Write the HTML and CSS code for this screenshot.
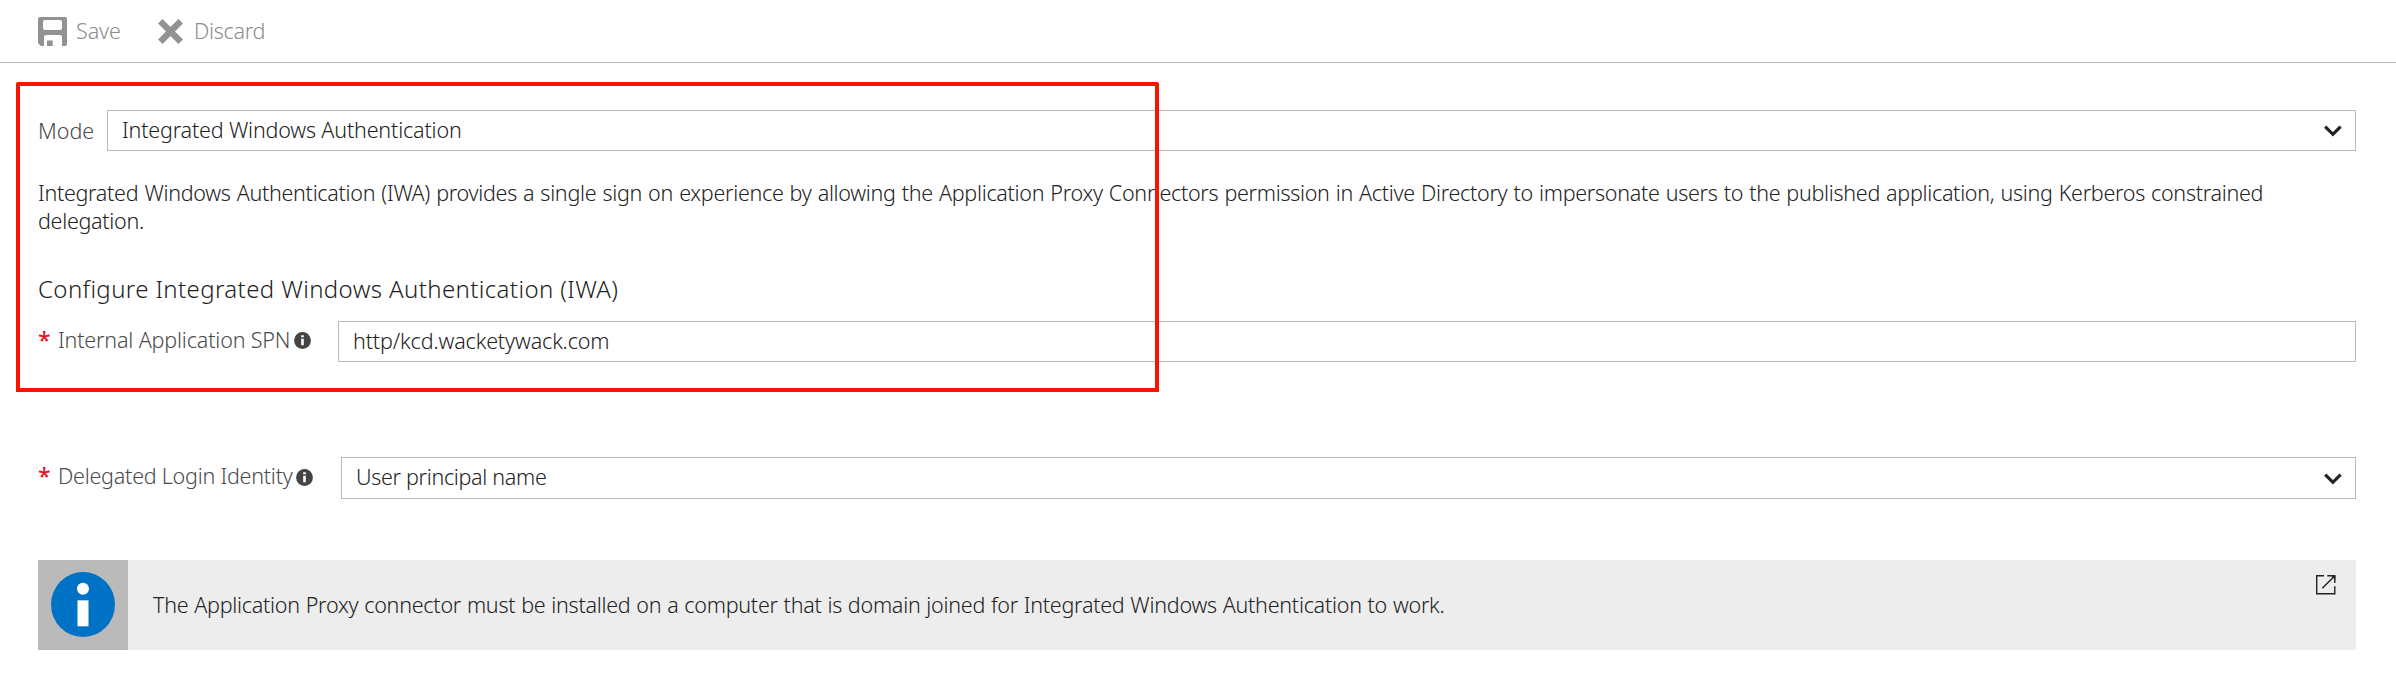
FILE: index.html
```
<!DOCTYPE html>
<html lang="en">
<head>
<meta charset="utf-8">
<title>Single sign-on</title>
<link rel="stylesheet" href="styles.css">
</head>
<body>
<header class="toolbar">
  <button class="command save">
    <svg width="29" height="29" viewBox="0 0 29 29"><path fill="#929292" fill-rule="evenodd" d="M2 0H27Q29 0 29 2V27Q29 29 27 29H24V20Q24 18 22 18H8Q6 18 6 20V29H3L0 26V2Q0 0 2 0ZM7 3Q5 3 5 5V11Q5 13 7 13H22Q24 13 24 11V5Q24 3 22 3ZM9 23.5H14.7V29H9Z"/></svg>
    <span>Save</span>
  </button>
  <button class="command discard">
    <svg width="25" height="25" viewBox="0 0 25 25"><path stroke="#929292" stroke-width="6.4" d="M2.3 2.3L22.7 22.7M22.7 2.3L2.3 22.7"/></svg>
    <span>Discard</span>
  </button>
</header>
<main class="content">
  <div class="field mode">
    <label class="label">Mode</label>
    <div class="box"><span class="value-mode">Integrated Windows Authentication</span>
      <svg class="chevron" width="18" height="12" viewBox="0 0 18 12"><path fill="none" stroke="#222" stroke-width="3.2" d="M1.2 1.6L8.9 9.3L16.6 1.6"/></svg>
    </div>
  </div>
  <p class="description">Integrated Windows Authentication (IWA) provides a single sign on experience by allowing the Application Proxy Connectors permission in Active Directory to impersonate users to the published application, using Kerberos constrained delegation.</p>
  <h2 class="heading">Configure Integrated Windows Authentication (IWA)</h2>
  <div class="field spn">
    <label class="label"><span class="required">*</span><span class="name">Internal Application SPN</span>
      <svg class="hint" width="17" height="17" viewBox="0 0 17 17"><circle cx="8.5" cy="8.5" r="8.4" fill="#444"/><path fill="#fff" d="M7.2 3.3h2.6v2H7.2zM7.2 6.8h2.6v6.4H7.2z"/></svg>
    </label>
    <div class="box"><span class="value-spn">http/kcd.wacketywack.com</span></div>
  </div>
  <div class="field identity">
    <label class="label"><span class="required">*</span><span class="name">Delegated Login Identity</span>
      <svg class="hint" width="17" height="17" viewBox="0 0 17 17"><circle cx="8.5" cy="8.5" r="8.4" fill="#444"/><path fill="#fff" d="M7.2 3.3h2.6v2H7.2zM7.2 6.8h2.6v6.4H7.2z"/></svg>
    </label>
    <div class="box"><span class="value-identity">User principal name</span>
      <svg class="chevron" width="18" height="12" viewBox="0 0 18 12"><path fill="none" stroke="#222" stroke-width="3.2" d="M1.2 1.6L8.9 9.3L16.6 1.6"/></svg>
    </div>
  </div>
  <div class="notice">
    <div class="notice-icon">
      <svg width="64" height="65" viewBox="0 0 64 65"><ellipse cx="32" cy="32.5" rx="32" ry="32.5" fill="#0072c6"/><circle cx="32" cy="16.8" r="6" fill="#fff"/><path fill="#fff" d="M26.5 28.3h11v26h-11z"/></svg>
    </div>
    <span class="notice-text">The Application Proxy connector must be installed on a computer that is domain joined for Integrated Windows Authentication to work.</span>
    <svg class="external" width="20" height="20" viewBox="0 0 20 20"><path fill="none" stroke="#222" stroke-width="1.4" d="M8 .7H.7V18.8H18.8V11.3M11.3 .7H18.8V8M18.8 .7L6.3 13.2"/><path fill="#222" d="M14.8 .5h4.5V5z"/></svg>
  </div>
</main>
<div class="highlight"></div>
</body>
</html>
```
FILE: styles.css
```
* { box-sizing: border-box; }
body {
  position: relative;
  margin: 0;
  background: #fff;
  color: #222;
  font: 300 21.5px/28px "Noto Sans", "Open Sans", sans-serif;
}
svg { display: block; flex: none; }
.toolbar {
  display: flex;
  align-items: center;
  height: 63px;
  padding: 0 38px;
  border-bottom: 1px solid #b9b9b9;
}
.command {
  display: flex;
  align-items: center;
  padding: 0;
  border: 0;
  background: none;
  color: #8c8c8c;
  font: inherit;
}
.save { width: 120px; gap: 9px; letter-spacing: -.1px; }
.discard { gap: 11px; letter-spacing: -.3px; }
.content { padding: 47px 40px 0 38px; }
.field { display: flex; height: 41px; }
.label {
  display: flex;
  flex: none;
  align-items: center;
  color: #4a4a4a;
}
.box {
  display: flex;
  flex: 1;
  align-items: center;
  justify-content: space-between;
  padding: 0 13px 2px 14px;
  border: 1px solid #b9b9b9;
  white-space: nowrap;
}
.mode .label { width: 69px; }
.value-mode { letter-spacing: -.17px; }
.chevron { margin-top: 3px; }
.description {
  margin: 28px 0 0;
  padding-right: 60px;
  letter-spacing: -.29px;
  word-spacing: .8px;
}
.heading {
  margin: 38px 0 16px;
  font-size: 24px;
  font-weight: 300;
  line-height: 32px;
  letter-spacing: .39px;
}
.spn .label { width: 300px; padding-bottom: 4px; }
.required {
  width: 20px;
  color: #e81123;
  font-size: 23px;
  font-weight: 500;
}
.name { letter-spacing: -.16px; white-space: nowrap; }
.hint { margin: 2px 0 0 4px; }
.value-spn { letter-spacing: -.14px; }
.identity { height: 42px; margin-top: 95px; }
.identity .label { width: 303px; padding-bottom: 4px; }
.identity .name { letter-spacing: -.23px; }
.identity .hint { margin-left: 3px; }
.value-identity { letter-spacing: -.31px; }
.notice {
  display: flex;
  align-items: center;
  height: 90px;
  margin-top: 61px;
  background: #ededed;
}
.notice-icon {
  display: flex;
  align-items: center;
  justify-content: center;
  width: 90px;
  height: 90px;
  padding-bottom: 1px;
  background: #bababa;
}
.notice-text {
  margin-left: 25px;
  letter-spacing: -.25px;
  word-spacing: .5px;
  white-space: nowrap;
}
.external { align-self: flex-start; margin: 15px 20px 0 auto; }
.highlight {
  position: absolute;
  top: 82px;
  left: 16px;
  width: 1143px;
  height: 310px;
  border: 4px solid #fa1400;
  border-radius: 2px 2px 0 0;
}
```
